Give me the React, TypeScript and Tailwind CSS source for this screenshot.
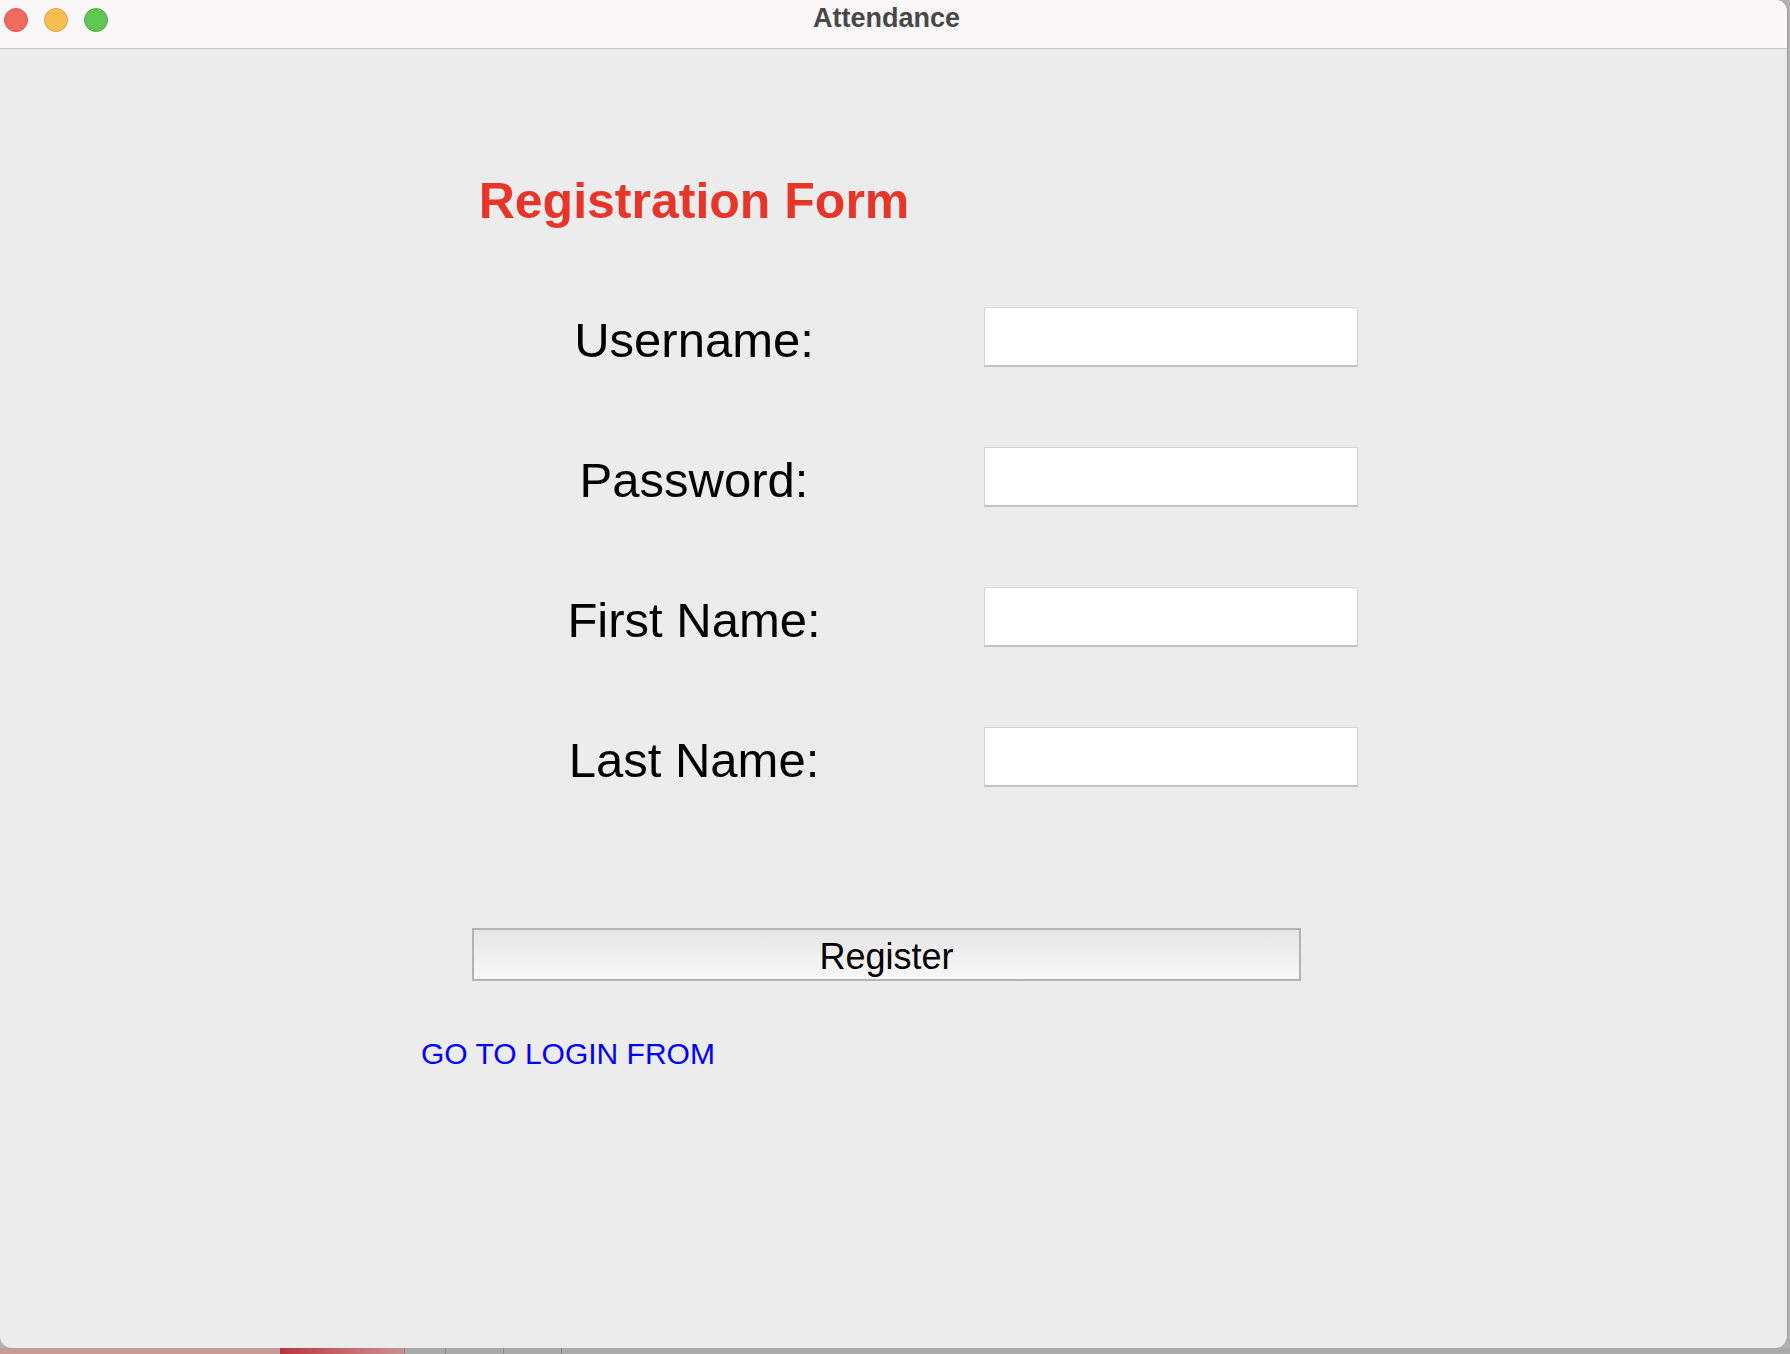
import React from "react";

const labels = ["Username:", "Password:", "First Name:", "Last Name:"];

function TrafficLights() {
  return (
    <div className="flex items-center gap-[16px] pl-[4px] pt-[8px]">
      <span className="block h-[24px] w-[24px] rounded-full border border-[#d8554b] bg-[#ee6b60]" />
      <span className="block h-[24px] w-[24px] rounded-full border border-[#d9a23c] bg-[#f6be4f]" />
      <span className="block h-[24px] w-[24px] rounded-full border border-[#4fae43] bg-[#62c655]" />
    </div>
  );
}

function Field({ label }: { label: string }) {
  return (
    <>
      <div className="h-[60px] pt-[6px] text-center text-[49px] leading-[54px] text-black whitespace-nowrap">
        {label}
      </div>
      <input
        type={label === "Password:" ? "password" : "text"}
        className="h-[60px] w-[374px] border border-b-2 border-[#d5d5d5] border-b-[#c2c2c2] bg-white px-2 text-[28px] outline-none"
      />
    </>
  );
}

export default function App() {
  return (
    <div
      className="flex h-[1354px] w-[1790px] flex-col overflow-hidden bg-[#b3b3b3]"
      style={{ fontFamily: '"Liberation Sans", Arial, sans-serif' }}
    >
      <div className="flex h-[1348px] w-[1788px] flex-col overflow-hidden rounded-tr-[12px] rounded-b-[12px] border-r border-[#9c9c9c] bg-[#ececec]">
        {/* title bar */}
        <div className="relative flex h-[49px] shrink-0 items-start border-b border-[#c6c6c6] bg-[#f9f7f8]">
          <TrafficLights />
          <div className="absolute left-0 right-0 top-0 flex justify-center pt-[5px]">
            <span className="ml-[-14px] text-[27px] font-bold leading-none text-[#474747]">
              Attendance
            </span>
          </div>
        </div>

        {/* form */}
        <div className="flex flex-col items-start pl-[421px] pt-[127px]">
          <div className="ml-[43px] w-[460px] text-center text-[50px] font-bold leading-none text-[#e8352a] whitespace-nowrap">
            Registration Form
          </div>

          <div className="ml-[43px] mt-[81px] grid grid-cols-[460px_374px] gap-x-[60px] gap-y-[80px]">
            {labels.map((l) => (
              <Field key={l} label={l} />
            ))}
          </div>

          <button
            type="button"
            className="ml-[51px] mt-[141px] h-[53px] w-[829px] border-2 border-[#b3b3b3] bg-gradient-to-b from-[#e6e6e6] to-[#f8f8f8] pt-[5px] text-center text-[36px] leading-[44px] text-black"
          >
            Register
          </button>

          <a className="mt-[58px] cursor-pointer text-[30px] leading-none text-[#0000ff]">
            GO TO LOGIN FROM
          </a>
        </div>
      </div>

      {/* desktop strip behind the window */}
      <div className="flex h-[6px] w-full">
        <div className="w-[280px] bg-[#c39b99]" />
        <div className="w-[124px] bg-gradient-to-r from-[#b8343e] to-[#c98f97]" />
        <div className="w-[41px] border-l border-[#8a8a8a] bg-[#a9a9a9]" />
        <div className="w-[58px] border-l border-[#8a8a8a] bg-[#a9a9a9]" />
        <div className="w-[58px] border-l border-[#8a8a8a] bg-[#a9a9a9]" />
        <div className="flex-1 border-l border-[#8a8a8a] bg-[#aaaaaa]" />
      </div>
    </div>
  );
}
